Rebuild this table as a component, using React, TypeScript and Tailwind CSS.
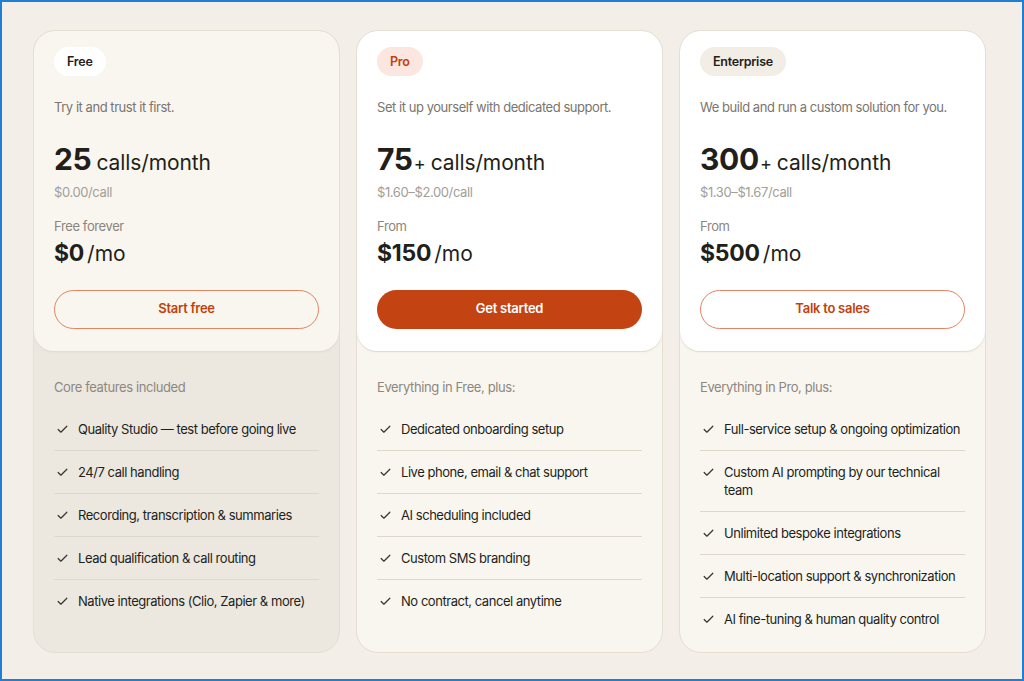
import { Check } from 'lucide-react'

type Plan = {
  name: string
  badge: string
  tagline: string
  calls: string
  plus: boolean
  perCall: string
  priceLabel: string
  price: string
  cta: string
  primary: boolean
  muted: boolean
  featuresTitle: string
  features: string[]
}

const plans: Plan[] = [
  {
    name: 'Free',
    badge: 'bg-white text-[#24211d]',
    tagline: 'Try it and trust it first.',
    calls: '25',
    plus: false,
    perCall: '$0.00/call',
    priceLabel: 'Free forever',
    price: '$0',
    cta: 'Start free',
    primary: false,
    muted: true,
    featuresTitle: 'Core features included',
    features: [
      'Quality Studio — test before going live',
      '24/7 call handling',
      'Recording, transcription & summaries',
      'Lead qualification & call routing',
      'Native integrations (Clio, Zapier & more)',
    ],
  },
  {
    name: 'Pro',
    badge: 'bg-[#fbe7e0] text-[#c2410c]',
    tagline: 'Set it up yourself with dedicated support.',
    calls: '75',
    plus: true,
    perCall: '$1.60–$2.00/call',
    priceLabel: 'From',
    price: '$150',
    cta: 'Get started',
    primary: true,
    muted: false,
    featuresTitle: 'Everything in Free, plus:',
    features: [
      'Dedicated onboarding setup',
      'Live phone, email & chat support',
      'AI scheduling included',
      'Custom SMS branding',
      'No contract, cancel anytime',
    ],
  },
  {
    name: 'Enterprise',
    badge: 'bg-[#f2ede5] text-[#24211d]',
    tagline: 'We build and run a custom solution for you.',
    calls: '300',
    plus: true,
    perCall: '$1.30–$1.67/call',
    priceLabel: 'From',
    price: '$500',
    cta: 'Talk to sales',
    primary: false,
    muted: false,
    featuresTitle: 'Everything in Pro, plus:',
    features: [
      'Full-service setup & ongoing optimization',
      'Custom AI prompting by our technical team',
      'Unlimited bespoke integrations',
      'Multi-location support & synchronization',
      'AI fine-tuning & human quality control',
    ],
  },
]

function PlanCard({ plan }: { plan: Plan }) {
  return (
    <div
      className={`flex w-[307px] flex-col overflow-hidden rounded-[22px] border border-[#e4ded3] ${
        plan.muted ? 'bg-[#ece8e0]' : 'bg-[#f9f6f0]'
      }`}
    >
      <div
        className={`flex flex-col rounded-[20px] px-5 pt-4 pb-[22px] shadow-[0_1px_0_#e2dcd1,0_1px_3px_rgba(120,100,70,0.08)] ${
          plan.muted ? 'bg-[#f9f6f0]' : 'bg-white'
        }`}
      >
        <span className={`self-start rounded-full px-[13px] py-[6px] text-[12.5px] leading-[17px] font-semibold tracking-[-0.02em] ${plan.badge}`}>
          {plan.name}
        </span>
        <p className="mt-[21px] text-[13px] leading-5 tracking-[-0.035em] text-[#7a756e]">{plan.tagline}</p>
        <div className="mt-[24px] flex items-baseline">
          <span className="text-[30px] leading-9 font-bold tracking-[-0.01em] text-[#221f1b]">{plan.calls}</span>
          {plan.plus && <span className="ml-[1px] text-[18px] text-[#221f1b]">+</span>}
          <span className="ml-[5px] text-[21px] tracking-[-0.005em] text-[#221f1b]">calls/month</span>
        </div>
        <p className="mt-[3px] text-[13px] leading-5 tracking-[-0.03em] text-[#a39e97]">{plan.perCall}</p>
        <p className="mt-[14px] text-[13px] leading-5 tracking-[-0.03em] text-[#8a857e]">{plan.priceLabel}</p>
        <div className="mt-[1px] flex items-baseline">
          <span className="text-[23px] leading-8 font-bold tracking-[-0.01em] text-[#221f1b]">{plan.price}</span>
          <span className="ml-[3px] text-[21px] leading-8 text-[#221f1b]">/mo</span>
        </div>
        <button
          className={`mt-[20px] h-[39px] w-full rounded-full text-[13px] font-semibold tracking-[-0.02em] ${
            plan.primary
              ? 'bg-[#c44313] text-white'
              : 'border-[1.5px] border-[#e08564] bg-transparent text-[#c2410c]'
          }`}
        >
          {plan.cta}
        </button>
      </div>
      <div className="flex flex-1 flex-col px-5 pt-[26px] pb-3">
        <p className="mb-[11px] text-[13px] leading-5 tracking-[-0.03em] text-[#8c877f]">{plan.featuresTitle}</p>
        <ul className="flex flex-col divide-y divide-[#ddd7cc]">
          {plan.features.map((f) => (
            <li key={f} className="flex items-start gap-[10px] py-3 pl-[2px]">
              <Check className="mt-[3px] h-[13px] w-[13px] shrink-0 text-[#3a3631]" strokeWidth={2.25} />
              <span className="-ml-[1px] text-[13px] leading-[18px] tracking-[-0.035em] text-[#221f1b]">{f}</span>
            </li>
          ))}
        </ul>
      </div>
    </div>
  )
}

export default function App() {
  return (
    <div
      className="h-[681px] w-full border-2 border-[#1f7fd6] bg-[#f3efe8] pt-[28px] pl-[31px]"
      style={{ fontFamily: 'Inter, "Liberation Sans", sans-serif' }}
    >
      <div className="flex gap-4">
        {plans.map((p) => (
          <PlanCard key={p.name} plan={p} />
        ))}
      </div>
    </div>
  )
}
